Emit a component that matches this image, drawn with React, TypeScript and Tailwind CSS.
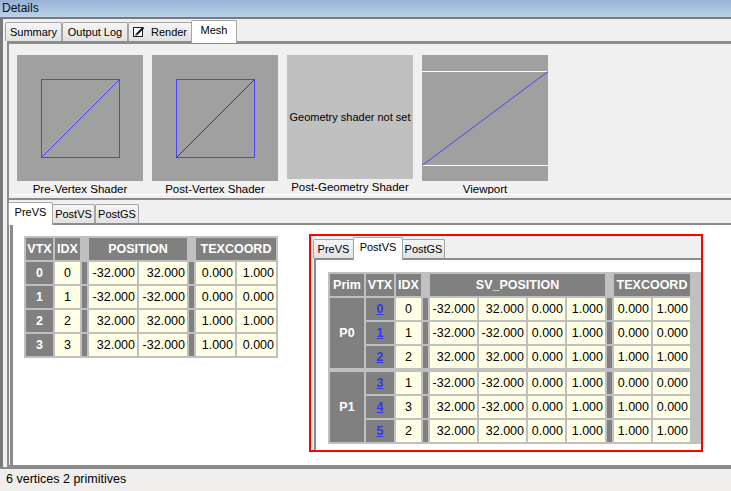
import type { ReactNode } from 'react';

type TabDef = { label: string; w: string; active?: boolean; icon?: ReactNode };

const Tab = ({ label, w, active, icon }: TabDef) => {
  if (active) {
    return (
      <div
        className={`${w} relative z-10 -mb-[2px] -mx-[1px] h-[23px] bg-white border border-b-0 border-[#a5a5a5] rounded-t-[2px] flex justify-center pt-[2px] text-[11px] leading-[14px] text-black`}
      >
        {label}
      </div>
    );
  }
  return (
    <div
      className={`${w} h-[19px] bg-gradient-to-b from-[#f5f5f5] to-[#e2e2e2] border border-b-0 border-[#a5a5a5] rounded-t-[2px] flex items-center justify-center gap-[6px] text-[11px] leading-[14px] text-black`}
    >
      {icon}
      {label}
    </div>
  );
};

const RenderIcon = () => (
  <svg width="12" height="12" viewBox="0 0 12 12">
    <rect x="0.5" y="1.5" width="9" height="9" fill="white" stroke="#202020" />
    <path d="M3 9 L10.5 1.5" stroke="#101010" strokeWidth="2" />
    <path d="M2.5 9.5 L4 8" stroke="#606060" strokeWidth="1" />
  </svg>
);

const Thumb = ({ label, children, light }: { label: string; children: ReactNode; light?: boolean }) => (
  <div className="w-[126px] flex flex-col items-center">
    <div className={`w-[126px] h-[126px] ${light ? 'bg-[#c0c0c0]' : 'bg-[#a0a0a0]'} flex items-center justify-center`}>
      {children}
    </div>
    <div className="mt-[1px] text-[11.5px] leading-[14px] whitespace-nowrap text-black">{label}</div>
  </div>
);

const dark = 'bg-[#808080] text-white font-bold flex items-center justify-center';
const val = 'bg-[#ffffe6] flex items-center justify-end pr-[2px]';
const idx = 'bg-[#ffffe6] flex items-center justify-center';
const sep = 'bg-[#808080]';

const preRows = [
  ['0', '0', '-32.000', '32.000', '0.000', '1.000'],
  ['1', '1', '-32.000', '-32.000', '0.000', '0.000'],
  ['2', '2', '32.000', '32.000', '1.000', '1.000'],
  ['3', '3', '32.000', '-32.000', '1.000', '0.000'],
];

const postRows = [
  ['0', '0', '-32.000', '32.000', '0.000', '1.000', '0.000', '1.000'],
  ['1', '1', '-32.000', '-32.000', '0.000', '1.000', '0.000', '0.000'],
  ['2', '2', '32.000', '32.000', '0.000', '1.000', '1.000', '1.000'],
  ['3', '1', '-32.000', '-32.000', '0.000', '1.000', '0.000', '0.000'],
  ['4', '3', '32.000', '-32.000', '0.000', '1.000', '1.000', '0.000'],
  ['5', '2', '32.000', '32.000', '0.000', '1.000', '1.000', '1.000'],
];

const PreTable = () => (
  <div className="grid grid-cols-[27px_25px_5px_48px_48px_5px_39px_39px] auto-rows-[22px] gap-[2px] p-[2px] bg-[#c0c0c0] text-[12.5px] leading-[14px] font-['Liberation_Sans',Arial,sans-serif]">
    <div className={dark}>VTX</div>
    <div className={dark}>IDX</div>
    <div />
    <div className={`${dark} col-span-2`}>POSITION</div>
    <div />
    <div className={`${dark} col-span-2`}>TEXCOORD</div>
    {preRows.map((r) => (
      <div key={r[0]} className="contents">
        <div className={dark}>{r[0]}</div>
        <div className={idx}>{r[1]}</div>
        <div className={sep} />
        <div className={val}>{r[2]}</div>
        <div className={val}>{r[3]}</div>
        <div className={sep} />
        <div className={val}>{r[4]}</div>
        <div className={val}>{r[5]}</div>
      </div>
    ))}
  </div>
);

const PostTable = () => (
  <div className="grid grid-cols-[34px_28px_25px_5px_47px_47px_37px_38px_5px_37px_37px] grid-rows-[22px_22px_22px_22px_0px_22px_22px_22px] gap-[2px] p-[2px] bg-[#c0c0c0] text-[12.5px] leading-[14px] font-['Liberation_Sans',Arial,sans-serif]">
    <div className="bg-[#808080] text-white font-bold flex items-center justify-center row-start-2 row-span-3 col-start-1">P0</div>
    <div className="bg-[#808080] text-white font-bold flex items-center justify-center row-start-6 row-span-3 col-start-1">P1</div>
    <div className={dark}>Prim</div>
    <div className={dark}>VTX</div>
    <div className={dark}>IDX</div>
    <div />
    <div className={`${dark} col-span-4`}>SV_POSITION</div>
    <div />
    <div className={`${dark} col-span-2`}>TEXCOORD</div>
    {postRows.map((r, i) => (
      <div key={r[0]} className="contents">
        {i === 3 && <div className="col-span-11 bg-[#c0c0c0]" />}
        <div className="bg-[#808080] flex items-center justify-center">
          <span className="text-[#3535e6] font-bold underline">{r[0]}</span>
        </div>
        <div className={idx}>{r[1]}</div>
        <div className={sep} />
        <div className={val}>{r[2]}</div>
        <div className={val}>{r[3]}</div>
        <div className={val}>{r[4]}</div>
        <div className={val}>{r[5]}</div>
        <div className={sep} />
        <div className={val}>{r[6]}</div>
        <div className={val}>{r[7]}</div>
      </div>
    ))}
  </div>
);

export default function App() {
  return (
    <div className="w-[731px] h-[491px] bg-[#f0f0f0] flex flex-col overflow-hidden font-['Liberation_Sans',Arial,sans-serif] text-black">
      {/* title */}
      <div className="h-[17px] shrink-0 bg-gradient-to-b from-[#97b3d4] to-[#bcd2eb] pl-[2px] text-[12px] leading-[17px] text-[#0c0c1c]">
        Details
      </div>

      <div className="flex-1 min-h-0 flex flex-col border-t-2 border-l-[3px] border-[#7a7a7a]">
        {/* mesh tabs */}
        <div className="h-[22px] shrink-0 flex items-end pl-[2px]">
          <Tab label="Summary" w="w-[57px]" />
          <Tab label="Output Log" w="w-[66px]" />
          <Tab label="Render" w="w-[64px]" icon={<RenderIcon />} />
          <Tab label="Mesh" w="w-[46px]" active />
        </div>

        <div className="flex-1 min-h-0 ml-[4px] flex flex-col border-t-[3px] border-l-[2px] border-b-[2px] border-[#8c8c8c]">
          {/* thumbnails */}
          <div className="h-[150px] shrink-0 flex gap-[9px] pt-[11px] pl-[8px]">
            <Thumb label="Pre-Vertex Shader">
              <svg width="126" height="126">
                <rect x="24.5" y="24.5" width="78" height="78" fill="none" stroke="#4646ff" />
                <line x1="24.5" y1="102.5" x2="102.5" y2="24.5" stroke="#4646ff" />
              </svg>
            </Thumb>
            <Thumb label="Post-Vertex Shader">
              <svg width="126" height="126">
                <rect x="24.5" y="24.5" width="78" height="78" fill="none" stroke="#4646ff" />
                <line x1="24.5" y1="102.5" x2="102.5" y2="24.5" stroke="#3a3a52" />
              </svg>
            </Thumb>
            <Thumb label="Post-Geometry Shader" light>
              <span className="text-[11px] leading-[14px] whitespace-nowrap text-black">Geometry shader not set</span>
            </Thumb>
            <Thumb label="Viewport">
              <svg width="126" height="126">
                <line x1="0" y1="16.5" x2="126" y2="16.5" stroke="white" />
                <line x1="0" y1="110.5" x2="126" y2="110.5" stroke="white" />
                <line x1="0" y1="110.5" x2="126" y2="16.5" stroke="#4646ff" />
              </svg>
            </Thumb>
          </div>

          {/* splitter */}
          <div className="h-[6px] shrink-0 border-t border-white border-b-2 border-b-[#8c8c8c]" />

          {/* lower tabs */}
          <div className="h-[23px] shrink-0 flex items-end pt-[1px]">
            <Tab label="PreVS" w="w-[45px]" active />
            <Tab label="PostVS" w="w-[43px]" />
            <Tab label="PostGS" w="w-[44px]" />
          </div>

          <div className="flex-1 min-h-0 ml-[1px] bg-white border-t-2 border-l-[3px] border-[#8c8c8c] flex items-start pt-[9px] pl-[11px]">
            <div className="mt-[2px]">
              <PreTable />
            </div>

            {/* highlighted PostVS view */}
            <div className="ml-[31px] w-[394px] h-[218px] border-2 border-[#ff0000] bg-[#f0f0f0] flex flex-col">
              <div className="h-[22px] shrink-0 flex items-end pl-[2px] pt-[1px]">
                <Tab label="PreVS" w="w-[41px]" />
                <Tab label="PostVS" w="w-[50px]" active />
                <Tab label="PostGS" w="w-[43px]" />
              </div>
              <div className="flex-1 ml-[3px] bg-white border-t-2 border-l-2 border-[#8c8c8c] pt-[12px] pl-[12px]">
                <PostTable />
              </div>
            </div>
          </div>
        </div>
      </div>

      {/* status bar */}
      <div className="h-[24px] shrink-0 border-t-2 border-[#8a8a8a] bg-[#f0eeec] pl-[6px] text-[12.5px] leading-[20px]">
        6 vertices 2 primitives
      </div>
    </div>
  );
}
